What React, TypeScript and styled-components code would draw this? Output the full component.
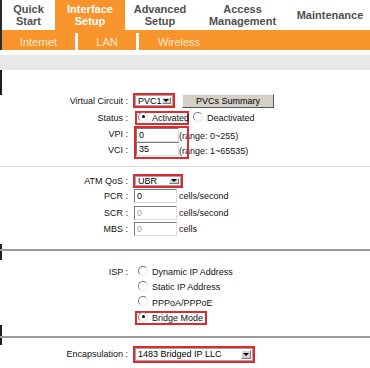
import React from 'react';
import styled, { createGlobalStyle } from 'styled-components';

const ORANGE = '#f7952c';

const GlobalStyle = createGlobalStyle`
  html, body {
    margin: 0;
    padding: 0;
    background: #fff;
  }
  body {
    font-family: "Liberation Sans", Arial, sans-serif;
    width: 370px;
    height: 368px;
    overflow: hidden;
  }
`;

const Header = styled.div`
  border-left: 2px solid #2b2b2b;
`;

const TabRow = styled.div`
  display: flex;
  height: 30px;
  background: #fff;
`;

const Tab = styled.div<{ $w: number; $active?: boolean }>`
  width: ${p => p.$w}px;
  display: flex;
  align-items: center;
  justify-content: center;
  text-align: center;
  padding-bottom: 1px;
  box-sizing: border-box;
  font-size: 11px;
  line-height: 12px;
  font-weight: bold;
  color: ${p => (p.$active ? '#fff' : '#4f4f4f')};
  background: ${p => (p.$active ? ORANGE : '#fff')};
`;

const SubNav = styled.div`
  display: flex;
  height: 20px;
  background: ${ORANGE};
`;

const SubItem = styled.div<{ $w: number }>`
  width: ${p => p.$w}px;
  display: flex;
  align-items: center;
  justify-content: center;
  padding-top: 3px;
  box-sizing: border-box;
  font-size: 11px;
  color: #fde8d0;
`;

const SubSep = styled.div`
  width: 3px;
  height: 17px;
  align-self: flex-end;
  background: #fff;
`;

const WhiteGap = styled.div`
  height: 5px;
`;

const GrayBand = styled.div`
  height: 15px;
  background: #e8e8e8;
`;

const Section = styled.div<{ $top: number; $bottom: number; $stub?: number }>`
  padding: ${p => p.$top}px 0 ${p => p.$bottom}px;
  ${p =>
    p.$stub
      ? `background: linear-gradient(#1e1e1e, #1e1e1e) 0 0 / 2px ${p.$stub}px no-repeat;`
      : ''}
`;

const FormGrid = styled.div<{ $rows: string }>`
  display: grid;
  grid-template-columns: 128px 1fr;
  grid-template-rows: ${p => p.$rows};
  column-gap: 5px;
  align-items: center;
`;

const Label = styled.div<{ $row?: number }>`
  grid-column: 1;
  ${p => (p.$row ? `grid-row: ${p.$row};` : '')}
  text-align: right;
  font-size: 9px;
  color: #111;
  white-space: nowrap;
`;

const Value = styled.div<{ $row?: string }>`
  grid-column: 2;
  ${p => (p.$row ? `grid-row: ${p.$row};` : '')}
  display: flex;
  align-items: center;
  font-size: 9px;
  color: #111;
  white-space: nowrap;
`;

const RedBox = styled.div<{ $w?: number; $ml?: number; $h?: number }>`
  position: relative;
  z-index: 1;
  display: flex;
  align-items: center;
  align-self: flex-start;
  border: 2px solid #dc2a2f;
  box-sizing: border-box;
  margin-left: ${p => p.$ml ?? 0}px;
  ${p => (p.$w ? `width: ${p.$w}px;` : 'padding-right: 2px;')}
  ${p => (p.$h ? `height: ${p.$h}px;` : '')}
`;

const StackBox = styled(RedBox)`
  flex-direction: column;
  align-items: flex-start;
  height: 33px;
  justify-content: space-around;
`;

const SelectBox = styled.div<{ $w: number; $h: number }>`
  width: ${p => p.$w}px;
  height: ${p => p.$h}px;
  display: flex;
  align-items: center;
  justify-content: space-between;
  background: #fff;
  border: 1px solid #a5a5a5;
  box-sizing: border-box;
  padding-left: 2px;
  font-size: 9px;
  color: #000;
`;

const Arrow = styled.span`
  width: 10px;
  height: calc(100% - 2px);
  margin-right: 1px;
  display: flex;
  align-items: center;
  justify-content: center;
  background: #d6d3ce;
  border: 1px solid;
  border-color: #fff #7a7a7a #7a7a7a #fff;
  box-sizing: border-box;

  &::after {
    content: '';
    border-left: 3px solid transparent;
    border-right: 3px solid transparent;
    border-top: 3px solid #000;
  }
`;

const Button = styled.div`
  width: 92px;
  height: 14px;
  margin-left: 7px;
  display: flex;
  align-items: center;
  justify-content: center;
  background: #d4d0c8;
  border: 1px solid;
  border-color: #f4f4f4 #555 #555 #f4f4f4;
  box-sizing: border-box;
  font-size: 9px;
  color: #000;
`;

const Input = styled.div<{ $disabled?: boolean }>`
  width: 43px;
  height: 14px;
  display: flex;
  align-items: center;
  padding-left: 2px;
  box-sizing: border-box;
  background: #fff;
  border: 1px solid;
  border-color: #7b7b7b #dcdcdc #dcdcdc #7b7b7b;
  font-size: 9px;
  color: ${p => (p.$disabled ? '#a0a0a0' : '#000')};
`;

const Unit = styled.span<{ $ml?: number }>`
  margin-left: ${p => p.$ml ?? 2}px;
  font-size: 9px;
  color: #111;
`;

const RangeCol = styled.div`
  display: flex;
  flex-direction: column;
  justify-content: space-around;
  height: 33px;
  margin-left: -10px;
  padding-top: 3px;
  box-sizing: border-box;
  font-size: 9px;
  color: #111;
`;

const Radio = styled.span<{ $on?: boolean }>`
  width: 8px;
  height: 8px;
  flex: none;
  border-radius: 50%;
  border: 1px solid;
  border-color: #7d7d7d #e4e4e4 #e4e4e4 #7d7d7d;
  background: #fff;
  display: inline-flex;
  align-items: center;
  justify-content: center;
  margin-top: -3px;

  &::after {
    content: '';
    width: 3px;
    height: 3px;
    border-radius: 50%;
    background: ${p => (p.$on ? '#000' : 'transparent')};
  }
`;

const Option = styled.label<{ $pl?: number }>`
  display: flex;
  align-items: center;
  gap: 4px;
  padding-left: ${p => p.$pl ?? 0}px;
  padding-top: 1px;
  font-size: 9px;
  color: #111;
  white-space: nowrap;
`;

const OptionList = styled.div`
  grid-column: 2;
  grid-row: 1 / span 4;
  display: grid;
  grid-template-rows: 15px 15px 16px 15px;
  align-items: center;
  justify-items: start;
`;

const LightRule = styled.div`
  height: 1px;
  background: #dedede;
`;

const Divider = styled.div<{ $h: number; $at: number }>`
  height: ${p => p.$h}px;
  padding-top: ${p => p.$at}px;
  box-sizing: border-box;
  border-left: 2px solid #1e1e1e;
`;

const Rule = styled.div`
  height: 2px;
  margin-left: -2px;
  background: #9a9a9a;
`;

const App = () => {
  return (
    <>
      <GlobalStyle />
      <Header>
        <TabRow>
          <Tab $w={53}>Quick<br />Start</Tab>
          <Tab $w={70} $active>Interface<br />Setup</Tab>
          <Tab $w={70}>Advanced<br />Setup</Tab>
          <Tab $w={95}>Access<br />Management</Tab>
          <Tab $w={80}>Maintenance</Tab>
        </TabRow>
        <SubNav>
          <SubItem $w={73}>Internet</SubItem>
          <SubSep />
          <SubItem $w={58}>LAN</SubItem>
          <SubSep />
          <SubItem $w={80}>Wireless</SubItem>
        </SubNav>
      </Header>
      <WhiteGap />
      <GrayBand />

      <Section $top={22} $bottom={8} $stub={25}>
        <FormGrid $rows="17px 17px 16px 16px">
          <Label $row={1}>Virtual Circuit :</Label>
          <Value $row="1">
            <RedBox $w={42}>
              <SelectBox $w={38} $h={11}>
                PVC1
                <Arrow />
              </SelectBox>
            </RedBox>
            <Button>PVCs Summary</Button>
          </Value>

          <Label $row={2}>Status :</Label>
          <Value $row="2">
            <RedBox $w={54} $ml={2} $h={14} style={{ alignSelf: 'center' }}>
              <Option $pl={1}>
                <Radio $on />
                Activated
              </Option>
            </RedBox>
            <Option $pl={4}>
              <Radio />
              Deactivated
            </Option>
          </Value>

          <Label $row={3}>VPI :</Label>
          <Label $row={4}>VCI :</Label>
          <Value $row="3 / span 2">
            <StackBox $w={55} $ml={1}>
              <Input>0</Input>
              <Input>35</Input>
            </StackBox>
            <RangeCol>
              <span>(range: 0~255)</span>
              <span>(range: 1~65535)</span>
            </RangeCol>
          </Value>
        </FormGrid>
      </Section>
      <LightRule />

      <Section $top={6} $bottom={7}>
        <FormGrid $rows="15px 16px 17px 16px">
          <Label $row={1}>ATM QoS :</Label>
          <Value $row="1">
            <RedBox $w={50}>
              <SelectBox $w={46} $h={10}>
                UBR
                <Arrow />
              </SelectBox>
            </RedBox>
          </Value>

          <Label $row={2}>PCR :</Label>
          <Value $row="2">
            <Input style={{ marginLeft: 1 }}>0</Input>
            <Unit>cells/second</Unit>
          </Value>

          <Label $row={3}>SCR :</Label>
          <Value $row="3">
            <Input $disabled style={{ marginLeft: 1 }}>0</Input>
            <Unit>cells/second</Unit>
          </Value>

          <Label $row={4}>MBS :</Label>
          <Value $row="4">
            <Input $disabled style={{ marginLeft: 1 }}>0</Input>
            <Unit>cells</Unit>
          </Value>
        </FormGrid>
      </Section>

      <Divider $h={16} $at={5}>
        <Rule />
      </Divider>

      <Section $top={4} $bottom={0}>
        <FormGrid $rows="15px 15px 16px 15px">
          <Label $row={1}>ISP :</Label>
          <OptionList>
            <Option $pl={5}>
              <Radio />
              Dynamic IP Address
            </Option>
            <Option $pl={5}>
              <Radio />
              Static IP Address
            </Option>
            <Option $pl={5}>
              <Radio />
              PPPoA/PPPoE
            </Option>
            <RedBox $ml={2} $h={14} style={{ alignSelf: 'center' }}>
              <Option $pl={1}>
                <Radio $on />
                Bridge Mode
              </Option>
            </RedBox>
          </OptionList>
        </FormGrid>
      </Section>

      <Divider $h={20} $at={11}>
        <Rule />
      </Divider>

      <Section $top={0} $bottom={0}>
        <FormGrid $rows="18px">
          <Label $row={1}>Encapsulation :</Label>
          <Value $row="1">
            <RedBox $w={122} style={{ alignSelf: 'center' }}>
              <SelectBox $w={118} $h={13}>
                1483 Bridged IP LLC
                <Arrow />
              </SelectBox>
            </RedBox>
          </Value>
        </FormGrid>
      </Section>
    </>
  );
};

export default App;
